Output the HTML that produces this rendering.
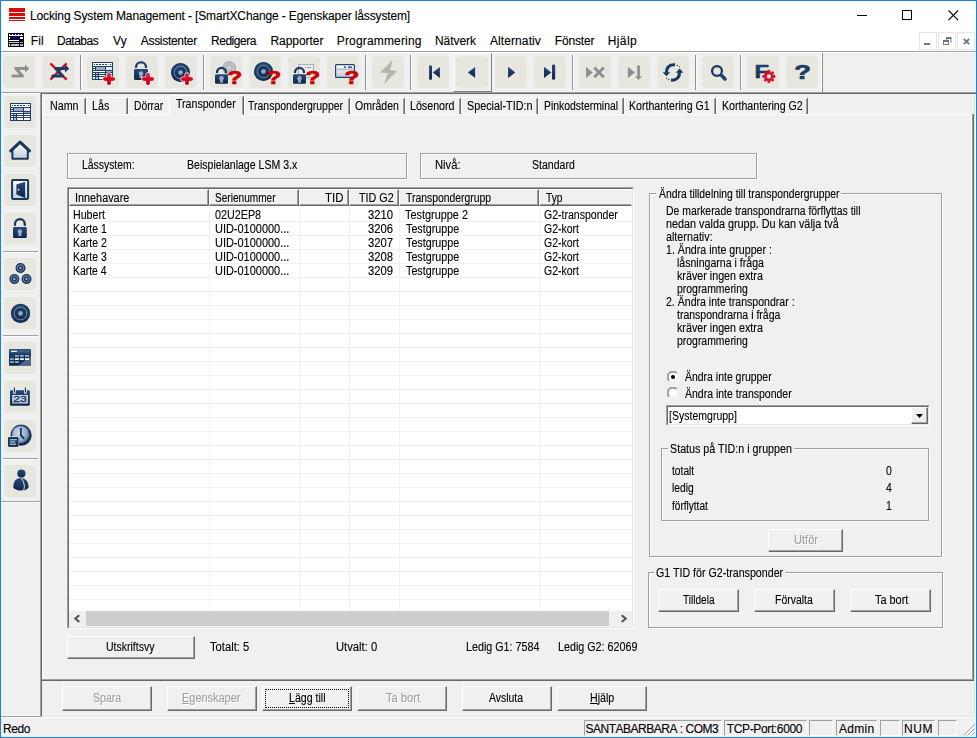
<!DOCTYPE html>
<html lang="sv">
<head>
<meta charset="utf-8">
<title>Locking System Management</title>
<style>
*{box-sizing:border-box;margin:0;padding:0}
html,body{width:977px;height:738px;overflow:hidden;background:#f0f0f0}
body{position:relative;font-family:"Liberation Sans",sans-serif;font-size:11px;color:#000}
body div,body span,body svg{position:absolute}
.t{white-space:nowrap;line-height:14px;height:14px;-webkit-text-stroke:0.12px currentColor}
.seg{font-size:12px;line-height:16px;height:16px;font-kerning:none}
.ms{font-size:12px;transform-origin:0 0;display:inline-block}
.gray{color:#a0a0a0}
.tb{width:32px;height:32px;top:56px;background:#e8e7df;border-radius:4px}
.tsep{width:1px;top:55px;height:35px;background:#a0a0a0}
.sb{width:32px;height:32px;left:4px;background:#e8e7df;border-radius:4px}
.btn{background:#f0f0f0;border:1px solid;border-color:#fff #696969 #696969 #fff;box-shadow:inset -1px -1px 0 #a0a0a0}
.sunk{border:1px solid;border-color:#a0a0a0 #fff #fff #a0a0a0}
.grp{border:1px solid #a0a0a0;box-shadow:1px 1px 0 #fff, inset 1px 1px 0 #fff}
.tab{border-left:1px solid #fff;border-top:1px solid #fff;border-right:1px solid #696969;border-top-left-radius:2px;border-top-right-radius:2px}
u{text-decoration:underline}
</style>
</head>
<body>
<svg width="0" height="0" style="left:0;top:0"><defs>
<linearGradient id="gn" x1="0" y1="0" x2="0" y2="1"><stop offset="0" stop-color="#27497a"/><stop offset="1" stop-color="#0b284c"/></linearGradient>
<linearGradient id="gr" x1="0" y1="0" x2="0" y2="1"><stop offset="0" stop-color="#e8455a"/><stop offset="0.5" stop-color="#d4102a"/><stop offset="1" stop-color="#c00018"/></linearGradient>
<linearGradient id="gw" x1="0" y1="0" x2="0" y2="1"><stop offset="0" stop-color="#ffffff"/><stop offset="1" stop-color="#c3cbdb"/></linearGradient>
<radialGradient id="gc" cx="0.4" cy="0.4" r="0.7"><stop offset="0" stop-color="#d5deea"/><stop offset="0.7" stop-color="#8fa3bf"/><stop offset="1" stop-color="#1b3c66"/></radialGradient>
</defs></svg>
<div class="" style="left:1px;top:1px;width:975px;height:30px;background:#fff"></div>
<div class="" style="left:9px;top:8px;width:16px;height:4px;background:#dc0a0a"></div>
<div class="" style="left:9px;top:13px;width:16px;height:3px;background:#dc0a0a"></div>
<div class="" style="left:9px;top:17px;width:16px;height:2px;background:#dc0a0a"></div>
<div class="" style="left:9px;top:20px;width:16px;height:1px;background:#dc0a0a"></div>
<span class="t seg" id="t0" style="left:30.00px;top:8px;letter-spacing:-0.135px;">Locking System Management - [SmartXChange - Egenskaper låssystem]</span>
<div class="" style="left:857px;top:15px;width:10px;height:1px;background:#000"></div>
<div class="" style="left:902px;top:10px;width:10px;height:10px;border:1px solid #000"></div>
<svg style="left:948px;top:10px" width="11" height="11" viewBox="0 0 11 11"><path d="M0.5 0.5L10.1 10.1M10.1 0.5L0.5 10.1" stroke="#000" stroke-width="1.1" fill="none"/></svg>
<div class="" style="left:1px;top:31px;width:975px;height:20px;background:#fff"></div>
<svg style="left:8px;top:33px" width="16" height="14" viewBox="0 0 16 14"><rect width="16" height="14" fill="#000"/><rect x="1" y="1" width="14" height="2" fill="#fff"/><path d="M2 1.5h2M5 1.5h2M8 1.5h2M11 1.5h2M14 1.5h1" stroke="#1010ff" stroke-width="1"/><rect x="1" y="4" width="1" height="2" fill="#fff"/><rect x="3" y="4" width="8" height="2" fill="#00008b"/><rect x="12" y="4" width="3" height="2" fill="#fff"/><rect x="1" y="7" width="10" height="1" fill="#fff"/><rect x="12" y="7" width="3" height="1" fill="#00008b"/><rect x="1" y="9" width="10" height="1" fill="#c8c8c8"/><rect x="12" y="9" width="3" height="1" fill="#b0b0b0"/><rect x="1" y="11" width="1" height="2" fill="#fff"/><rect x="3" y="11" width="8" height="2" fill="#c0c0c0"/><rect x="12" y="11" width="3" height="2" fill="#b0b0b0"/></svg>
<span class="t seg" id="t1" style="left:30.75px;top:33px;letter-spacing:0.127px;">Fil</span>
<span class="t seg" id="t2" style="left:57.00px;top:33px;letter-spacing:-0.508px;">Databas</span>
<span class="t seg" id="t3" style="left:113.00px;top:33px;letter-spacing:-0.354px;">Vy</span>
<span class="t seg" id="t4" style="left:140.75px;top:33px;letter-spacing:-0.296px;">Assistenter</span>
<span class="t seg" id="t5" style="left:211.00px;top:33px;letter-spacing:-0.468px;">Redigera</span>
<span class="t seg" id="t6" style="left:270.50px;top:33px;letter-spacing:-0.052px;">Rapporter</span>
<span class="t seg" id="t7" style="left:336.75px;top:33px;letter-spacing:0.165px;">Programmering</span>
<span class="t seg" id="t8" style="left:435.00px;top:33px;letter-spacing:-0.074px;">Nätverk</span>
<span class="t seg" id="t9" style="left:490.00px;top:33px;letter-spacing:0.087px;">Alternativ</span>
<span class="t seg" id="t10" style="left:554.75px;top:33px;letter-spacing:-0.173px;">Fönster</span>
<span class="t seg" id="t11" style="left:607.75px;top:33px;letter-spacing:0.395px;">Hjälp</span>
<div class="" style="left:919px;top:32px;width:18px;height:18px;border:1px solid #e5e5e5;background:#fff"></div>
<div class="" style="left:938px;top:32px;width:18px;height:18px;border:1px solid #e5e5e5;background:#fff"></div>
<div class="" style="left:957px;top:32px;width:18px;height:18px;border:1px solid #e5e5e5;background:#fff"></div>
<div class="" style="left:924px;top:43px;width:6px;height:2px;background:#6a768d"></div>
<svg style="left:943px;top:37px" width="9" height="8" viewBox="0 0 9 8"><path d="M3 1h5.5" stroke="#6a768d" stroke-width="2"/><path d="M8 2v3.5M3.5 2v1.5" stroke="#6a768d" stroke-width="1" fill="none"/><rect x="0.5" y="3.5" width="5" height="4" fill="#fff" stroke="#6a768d"/><path d="M0 4h6" stroke="#6a768d" stroke-width="2"/></svg>
<svg style="left:963px;top:38px" width="7" height="7" viewBox="0 0 7 7"><path d="M0.8 0.8L6.2 6.2M6.2 0.8L0.8 6.2" stroke="#6a768d" stroke-width="1.9" fill="none"/></svg>
<div class="" style="left:1px;top:51px;width:975px;height:1px;background:#a0a0a0"></div>
<div class="" style="left:1px;top:52px;width:975px;height:1px;background:#ffffff"></div>
<div class="" style="left:1px;top:92px;width:975px;height:1px;background:#a0a0a0"></div>
<div class="" style="left:1px;top:93px;width:975px;height:1px;background:#696969"></div>
<div class="" style="left:453px;top:53px;width:39px;height:39px;background:#f0f0f0;border:1px solid;border-color:#fff #808080 #808080 #fff"></div>
<div class="tb" style="left:3px;top:56px;width:32px;height:32px;"><svg width="32" height="32" viewBox="0 0 32 32" style="left:0;top:0"><path d="M9.7 20H19.5L12.8 12.5H23" stroke="#8f8f8f" stroke-width="3" fill="none" stroke-linecap="round" stroke-linejoin="round"/><path d="M22 8.6L26.3 12.5L22 16.4z" fill="#8f8f8f"/></svg></div>
<div class="tb" style="left:42px;top:56px;width:32px;height:32px;"><svg width="32" height="32" viewBox="0 0 32 32" style="left:0;top:0"><path d="M8.4 7.4L24.6 23.6M24.6 7.4L8.4 23.6" stroke="#f2ebe6" stroke-width="3.4" fill="none"/><path d="M8.4 7.4L24.6 23.6M24.6 7.4L8.4 23.6" stroke="#e00018" stroke-width="2.2" fill="none"/><g transform="translate(1 0)"><path d="M9.7 20H19.5L12.8 12.5H23" stroke="#1b3c66" stroke-width="3" fill="none" stroke-linecap="round" stroke-linejoin="round"/><path d="M22 8.6L26.3 12.5L22 16.4z" fill="#1b3c66"/></g></svg></div>
<div class="tb" style="left:87px;top:56px;width:32px;height:32px;"><svg width="32" height="32" viewBox="0 0 32 32" style="left:0;top:0"><g transform="translate(5 6)"><rect x="0" y="0" width="21" height="18" fill="#1f3f6b"/><rect x="1" y="1" width="19" height="3" fill="#fff"/><path d="M2 2.5h1M4 2.5h2M7 2.5h2M10 2.5h2M13 2.5h2M18 2.5h1" stroke="#1f3f6b" stroke-width="1"/><path d="M16 2.5h1.5" stroke="#b5bccb" stroke-width="1"/><rect x="1" y="5" width="2" height="1" fill="#fff"/><rect x="1" y="7" width="2" height="1" fill="#fff"/><rect x="4" y="5" width="9" height="3" fill="#9ea6c1"/><rect x="14" y="5" width="6" height="3" fill="#e6e8ef"/><rect x="1" y="9" width="12" height="1" fill="#fff"/><rect x="14" y="9" width="6" height="1" fill="#9ea6c1"/><rect x="1" y="11" width="2" height="1" fill="#fff"/><rect x="4" y="11" width="2" height="1" fill="#b9bed0"/><rect x="7" y="11" width="6" height="1" fill="#fff"/><rect x="14" y="11" width="6" height="1" fill="#fff"/><rect x="1" y="13" width="2" height="1" fill="#fff"/><rect x="4" y="13" width="2" height="1" fill="#b9bed0"/><rect x="7" y="13" width="6" height="1" fill="#fff"/><rect x="14" y="13" width="6" height="1" fill="#fff"/><rect x="1" y="15" width="2" height="2" fill="#fff"/><rect x="4" y="15" width="2" height="2" fill="#b9bed0"/><rect x="7" y="15" width="6" height="2" fill="#fff"/><rect x="14" y="15" width="6" height="2" fill="#fff"/></g><path d="M22 18.8V27.2M17.8 23H26.2" stroke="#f3ebe6" stroke-width="5" stroke-linecap="round" fill="none"/><path d="M22 18.8V27.2M17.8 23H26.2" stroke="url(#gr)" stroke-width="3.5" stroke-linecap="round" fill="none"/><path d="M22 18.8V27.2M17.8 23H26.2" stroke="#d8001c" stroke-width="3.5" stroke-linecap="round" fill="none" opacity="0.55"/></svg></div>
<div class="tb" style="left:126px;top:56px;width:32px;height:32px;"><svg width="32" height="32" viewBox="0 0 32 32" style="left:0;top:0"><path d="M10 11.8V11.3A5 5 0 0 1 20 11.3V11.8" stroke="url(#gn)" stroke-width="2.1" fill="none"/><path d="M10 11.8V11.3A5 5 0 0 1 20 11.3V11.8" stroke="#17365f" stroke-width="2.1" fill="none" opacity="0.5"/><rect x="8" y="13" width="14" height="11" rx="1.3" fill="url(#gn)"/><circle cx="15" cy="17.62" r="2.3" fill="#a3a9c4"/><path d="M13.8 17.62L13.4 21.92H16.6L16.2 17.62z" fill="#a3a9c4"/><path d="M22 18.8V27.2M17.8 23H26.2" stroke="#f3ebe6" stroke-width="5" stroke-linecap="round" fill="none"/><path d="M22 18.8V27.2M17.8 23H26.2" stroke="url(#gr)" stroke-width="3.5" stroke-linecap="round" fill="none"/><path d="M22 18.8V27.2M17.8 23H26.2" stroke="#d8001c" stroke-width="3.5" stroke-linecap="round" fill="none" opacity="0.55"/></svg></div>
<div class="tb" style="left:165px;top:56px;width:32px;height:32px;"><svg width="32" height="32" viewBox="0 0 32 32" style="left:0;top:0"><circle cx="15.5" cy="16.5" r="9.5" fill="url(#gn)"/><circle cx="15.5" cy="16.5" r="9.5" fill="#17375f" opacity="0.45"/><circle cx="15.5" cy="16.5" r="6.365" fill="none" stroke="#8ea0ba" stroke-width="0.8"/><circle cx="15.5" cy="16.5" r="2.28" fill="#9fa7c3"/><path d="M22 18.8V27.2M17.8 23H26.2" stroke="#f3ebe6" stroke-width="5" stroke-linecap="round" fill="none"/><path d="M22 18.8V27.2M17.8 23H26.2" stroke="url(#gr)" stroke-width="3.5" stroke-linecap="round" fill="none"/><path d="M22 18.8V27.2M17.8 23H26.2" stroke="#d8001c" stroke-width="3.5" stroke-linecap="round" fill="none" opacity="0.55"/></svg></div>
<div class="tb" style="left:210px;top:56px;width:32px;height:32px;"><svg width="32" height="32" viewBox="0 0 32 32" style="left:0;top:0"><circle cx="19.2" cy="12.1" r="7" fill="#adb6be"/><circle cx="19.2" cy="12.1" r="4.34" fill="none" stroke="#c4cbd1" stroke-width="1.2"/><circle cx="19.2" cy="12.1" r="2.1" fill="#cdd2d6"/><path d="M7 17V16.4A4.5 4.5 0 0 1 16 16.4V17" stroke="url(#gn)" stroke-width="2.1" fill="none"/><path d="M7 17V16.4A4.5 4.5 0 0 1 16 16.4V17" stroke="#17365f" stroke-width="2.1" fill="none" opacity="0.5"/><rect x="5" y="18.2" width="13" height="9.6" rx="1.3" fill="url(#gn)"/><circle cx="11.5" cy="22.232" r="2.3" fill="#a3a9c4"/><path d="M10.3 22.232L9.9 26.532H13.1L12.7 22.232z" fill="#a3a9c4"/><text x="0" y="0" transform="translate(17.5 28) scale(1.3 1)" font-family="Liberation Sans, sans-serif" font-weight="bold" font-size="18.5" fill="#cc0000" stroke="#cc0000" stroke-width="0.7" stroke-linejoin="round">?</text></svg></div>
<div class="tb" style="left:249px;top:56px;width:32px;height:32px;"><svg width="32" height="32" viewBox="0 0 32 32" style="left:0;top:0"><circle cx="14.5" cy="15.5" r="9.5" fill="url(#gn)"/><circle cx="14.5" cy="15.5" r="9.5" fill="#17375f" opacity="0.45"/><circle cx="14.5" cy="15.5" r="6.365" fill="none" stroke="#8ea0ba" stroke-width="0.8"/><circle cx="14.5" cy="15.5" r="2.28" fill="#9fa7c3"/><text x="0" y="0" transform="translate(17.5 28) scale(1.3 1)" font-family="Liberation Sans, sans-serif" font-weight="bold" font-size="18.5" fill="#cc0000" stroke="#cc0000" stroke-width="0.7" stroke-linejoin="round">?</text></svg></div>
<div class="tb" style="left:288px;top:56px;width:32px;height:32px;"><svg width="32" height="32" viewBox="0 0 32 32" style="left:0;top:0"><rect x="10.5" y="8.5" width="15" height="13" fill="#e9e9e6" stroke="#a7b3c3" stroke-width="1"/><path d="M17 11.5h1M19 11.5h4" stroke="#8c9bb3" stroke-width="1"/><path d="M7 17V16.4A4.5 4.5 0 0 1 16 16.4V17" stroke="url(#gn)" stroke-width="2.1" fill="none"/><path d="M7 17V16.4A4.5 4.5 0 0 1 16 16.4V17" stroke="#17365f" stroke-width="2.1" fill="none" opacity="0.5"/><rect x="5" y="18.2" width="13" height="9.6" rx="1.3" fill="url(#gn)"/><circle cx="11.5" cy="22.232" r="2.3" fill="#a3a9c4"/><path d="M10.3 22.232L9.9 26.532H13.1L12.7 22.232z" fill="#a3a9c4"/><text x="0" y="0" transform="translate(17.5 28) scale(1.3 1)" font-family="Liberation Sans, sans-serif" font-weight="bold" font-size="18.5" fill="#cc0000" stroke="#cc0000" stroke-width="0.7" stroke-linejoin="round">?</text></svg></div>
<div class="tb" style="left:327px;top:56px;width:32px;height:32px;"><svg width="32" height="32" viewBox="0 0 32 32" style="left:0;top:0"><rect x="8.6" y="8.6" width="18.8" height="12.8" rx="1" fill="url(#gw)" stroke="#1f426f" stroke-width="1.2"/><rect x="9.2" y="12.6" width="17.6" height="1.6" fill="#b3bdd6"/><path d="M17 11.2h2M21 11.2h4" stroke="#14305a" stroke-width="1.3"/><text x="0" y="0" transform="translate(17.5 28) scale(1.3 1)" font-family="Liberation Sans, sans-serif" font-weight="bold" font-size="18.5" fill="#cc0000" stroke="#cc0000" stroke-width="0.7" stroke-linejoin="round">?</text></svg></div>
<div class="tb" style="left:372px;top:56px;width:32px;height:32px;"><svg width="32" height="32" viewBox="0 0 32 32" style="left:0;top:0"><path d="M20.7 4L8 16.5L16 17.2L12 28L25 15L18 14.2z" fill="#b5b5af"/></svg></div>
<div class="tb" style="left:417px;top:56px;width:32px;height:32px;"><svg width="32" height="32" viewBox="0 0 32 32" style="left:0;top:0"><rect x="12.1" y="9.2" width="2.9" height="14.7" rx="1.4" fill="url(#gn)"/><path d="M15.8 16.4L22.9 10.9V21.9z" fill="url(#gn)"/></svg></div>
<div class="tb" style="left:456px;top:56px;width:32px;height:32px;"><svg width="32" height="32" viewBox="0 0 32 32" style="left:0;top:0"><path d="M11.8 16.4L19.1 11V21.8z" fill="url(#gn)"/></svg></div>
<div class="tb" style="left:495px;top:56px;width:32px;height:32px;"><svg width="32" height="32" viewBox="0 0 32 32" style="left:0;top:0"><path d="M20.3 16.4L13.1 10.8V22z" fill="url(#gn)"/></svg></div>
<div class="tb" style="left:534px;top:56px;width:32px;height:32px;"><svg width="32" height="32" viewBox="0 0 32 32" style="left:0;top:0"><path d="M17.3 16.4L10 10.8V22z" fill="url(#gn)"/><rect x="18" y="8.6" width="3.2" height="15.2" rx="1.4" fill="url(#gn)"/></svg></div>
<div class="tb" style="left:579px;top:56px;width:32px;height:32px;"><svg width="32" height="32" viewBox="0 0 32 32" style="left:0;top:0"><path d="M13.8 16.4L7 10.9V21.9z" fill="#8e8e8e"/><path d="M15.3 11.5L24.8 21.3M24.8 11.5L15.3 21.3" stroke="#8e8e8e" stroke-width="2.9" fill="none"/></svg></div>
<div class="tb" style="left:618px;top:56px;width:32px;height:32px;"><svg width="32" height="32" viewBox="0 0 32 32" style="left:0;top:0"><path d="M17 16.4L9.9 10.9V21.9z" fill="#8e8e8e"/><rect x="19.2" y="9.2" width="2.7" height="12" rx="1.2" fill="#8e8e8e"/><path d="M17 20.3H24.1L20.55 24z" fill="#8e8e8e"/></svg></div>
<div class="tb" style="left:657px;top:56px;width:32px;height:32px;"><svg width="32" height="32" viewBox="0 0 32 32" style="left:0;top:0"><path d="M18 8.8C12.5 8.3 9.3 11.5 9.5 16.8" stroke="#17375f" stroke-width="3" fill="none"/><path d="M5.6 16.2H13.2L9.4 20.3z" fill="#17375f"/><circle cx="20.3" cy="9.4" r="0.7" fill="#17375f"/><circle cx="22.4" cy="10.6" r="0.6" fill="#17375f"/><g transform="rotate(180 16 16.45)"><path d="M18 8.8C12.5 8.3 9.3 11.5 9.5 16.8" stroke="#17375f" stroke-width="3" fill="none"/><path d="M5.6 16.2H13.2L9.4 20.3z" fill="#17375f"/><circle cx="20.3" cy="9.4" r="0.7" fill="#17375f"/><circle cx="22.4" cy="10.6" r="0.6" fill="#17375f"/></g></svg></div>
<div class="tb" style="left:702px;top:56px;width:32px;height:32px;"><svg width="32" height="32" viewBox="0 0 32 32" style="left:0;top:0"><circle cx="15" cy="15" r="4.9" fill="none" stroke="#17375f" stroke-width="2.3"/><path d="M19.6 19.6L23 23" stroke="#1f426f" stroke-width="3.6" stroke-linecap="round"/></svg></div>
<div class="tb" style="left:747px;top:56px;width:32px;height:32px;"><svg width="32" height="32" viewBox="0 0 32 32" style="left:0;top:0"><text transform="translate(7.6 22) scale(1.32 1)" font-family="Liberation Sans, sans-serif" font-weight="bold" font-size="18" fill="url(#gn)" stroke="#17375f" stroke-width="0.5">F</text><path d="M28.01 19.33L28.01 21.47L26.18 21.43L25.65 22.70L26.97 23.97L25.47 25.47L24.20 24.15L22.93 24.68L22.97 26.51L20.83 26.51L20.87 24.68L19.60 24.15L18.33 25.47L16.83 23.97L18.15 22.70L17.62 21.43L15.79 21.47L15.79 19.33L17.62 19.37L18.15 18.10L16.83 16.83L18.33 15.33L19.60 16.65L20.87 16.12L20.83 14.29L22.97 14.29L22.93 16.12L24.20 16.65L25.47 15.33L26.97 16.83L25.65 18.10L26.18 19.37z" fill="#d4102a" stroke="#d4102a" stroke-width="0.8" stroke-linejoin="round"/><circle cx="21.9" cy="20.4" r="2.1" fill="#f4f0ee"/></svg></div>
<div class="tb" style="left:786px;top:56px;width:32px;height:32px;"><svg width="32" height="32" viewBox="0 0 32 32" style="left:0;top:0"><text x="0" y="0" transform="translate(8.2 23.2) scale(1.36 1)" font-family="Liberation Sans, sans-serif" font-weight="bold" font-size="20" fill="#1b3c66" stroke="#1b3c66" stroke-width="0.7" stroke-linejoin="round">?</text></svg></div>
<div class="" style="left:80px;top:55px;width:1px;height:35px;background:#909090"></div>
<div class="" style="left:81px;top:55px;width:1px;height:35px;background:#ffffff"></div>
<div class="" style="left:203px;top:55px;width:1px;height:35px;background:#909090"></div>
<div class="" style="left:204px;top:55px;width:1px;height:35px;background:#ffffff"></div>
<div class="" style="left:365px;top:55px;width:1px;height:35px;background:#909090"></div>
<div class="" style="left:366px;top:55px;width:1px;height:35px;background:#ffffff"></div>
<div class="" style="left:410px;top:55px;width:1px;height:35px;background:#909090"></div>
<div class="" style="left:411px;top:55px;width:1px;height:35px;background:#ffffff"></div>
<div class="" style="left:572px;top:55px;width:1px;height:35px;background:#909090"></div>
<div class="" style="left:573px;top:55px;width:1px;height:35px;background:#ffffff"></div>
<div class="" style="left:695px;top:55px;width:1px;height:35px;background:#909090"></div>
<div class="" style="left:696px;top:55px;width:1px;height:35px;background:#ffffff"></div>
<div class="" style="left:740px;top:55px;width:1px;height:35px;background:#909090"></div>
<div class="" style="left:741px;top:55px;width:1px;height:35px;background:#ffffff"></div>
<div class="" style="left:821px;top:53px;width:1px;height:39px;background:#ffffff"></div>
<div class="" style="left:822px;top:53px;width:1px;height:39px;background:#909090"></div>
<div class="" style="left:1px;top:93px;width:39px;height:1px;background:#ffffff"></div>
<div class="sb" style="left:4px;top:96px;width:32px;height:32px;"><svg width="32" height="32" viewBox="0 0 32 32" style="left:0;top:0"><g transform="translate(6 7)"><rect x="0" y="0" width="21" height="18" fill="#1f3f6b"/><rect x="1" y="1" width="19" height="3" fill="#fff"/><path d="M2 2.5h1M4 2.5h2M7 2.5h2M10 2.5h2M13 2.5h2M18 2.5h1" stroke="#1f3f6b" stroke-width="1"/><path d="M16 2.5h1.5" stroke="#b5bccb" stroke-width="1"/><rect x="1" y="5" width="2" height="1" fill="#fff"/><rect x="1" y="7" width="2" height="1" fill="#fff"/><rect x="4" y="5" width="9" height="3" fill="#9ea6c1"/><rect x="14" y="5" width="6" height="3" fill="#e6e8ef"/><rect x="1" y="9" width="12" height="1" fill="#fff"/><rect x="14" y="9" width="6" height="1" fill="#9ea6c1"/><rect x="1" y="11" width="2" height="1" fill="#fff"/><rect x="4" y="11" width="2" height="1" fill="#b9bed0"/><rect x="7" y="11" width="6" height="1" fill="#fff"/><rect x="14" y="11" width="6" height="1" fill="#fff"/><rect x="1" y="13" width="2" height="1" fill="#fff"/><rect x="4" y="13" width="2" height="1" fill="#b9bed0"/><rect x="7" y="13" width="6" height="1" fill="#fff"/><rect x="14" y="13" width="6" height="1" fill="#fff"/><rect x="1" y="15" width="2" height="2" fill="#fff"/><rect x="4" y="15" width="2" height="2" fill="#b9bed0"/><rect x="7" y="15" width="6" height="2" fill="#fff"/><rect x="14" y="15" width="6" height="2" fill="#fff"/></g></svg></div>
<div class="sb" style="left:4px;top:135px;width:32px;height:32px;"><svg width="32" height="32" viewBox="0 0 32 32" style="left:0;top:0"><path d="M8.4 15.5L16.1 8.3L23.8 15.5V23.7H8.4z" fill="url(#gw)"/><path d="M8.4 15V23.7H23.8V15" stroke="#17375f" stroke-width="2" fill="none" stroke-linejoin="round"/><path d="M6.7 15.8L16.1 7.1L25.5 15.8" stroke="#17375f" stroke-width="3.1" fill="none" stroke-linejoin="round" stroke-linecap="round"/></svg></div>
<div class="sb" style="left:4px;top:174px;width:32px;height:32px;"><svg width="32" height="32" viewBox="0 0 32 32" style="left:0;top:0"><rect x="8.1" y="6.1" width="16" height="18.8" rx="0.8" fill="url(#gw)" stroke="#17375f" stroke-width="2"/><path d="M12.4 10.4L21.1 7.7V24.1L12.4 20.4z" fill="url(#gn)"/><path d="M13.9 14.4L15.7 15.7L13.9 17z" fill="#fff"/></svg></div>
<div class="sb" style="left:4px;top:213px;width:32px;height:32px;"><svg width="32" height="32" viewBox="0 0 32 32" style="left:0;top:0"><path d="M11 12.8V11A4.9 4.9 0 0 1 20.8 11V12.8" stroke="url(#gn)" stroke-width="2.1" fill="none"/><path d="M11 12.8V11A4.9 4.9 0 0 1 20.8 11V12.8" stroke="#17365f" stroke-width="2.1" fill="none" opacity="0.5"/><rect x="9" y="14" width="13.8" height="11" rx="1.3" fill="url(#gn)"/><circle cx="15.9" cy="18.62" r="2.3" fill="#a3a9c4"/><path d="M14.7 18.62L14.3 22.92H17.5L17.1 18.62z" fill="#a3a9c4"/></svg></div>
<div class="sb" style="left:4px;top:258px;width:32px;height:32px;"><svg width="32" height="32" viewBox="0 0 32 32" style="left:0;top:0"><circle cx="16.5" cy="10" r="4.9" fill="url(#gn)"/><circle cx="16.5" cy="10" r="4.9" fill="#17375f" opacity="0.45"/><circle cx="16.5" cy="10" r="3.283" fill="none" stroke="#8ea0ba" stroke-width="0.8"/><circle cx="16.5" cy="10" r="1.176" fill="#9fa7c3"/><circle cx="10.4" cy="21" r="4.9" fill="url(#gn)"/><circle cx="10.4" cy="21" r="4.9" fill="#17375f" opacity="0.45"/><circle cx="10.4" cy="21" r="3.283" fill="none" stroke="#8ea0ba" stroke-width="0.8"/><circle cx="10.4" cy="21" r="1.176" fill="#9fa7c3"/><circle cx="22.5" cy="21" r="4.9" fill="url(#gn)"/><circle cx="22.5" cy="21" r="4.9" fill="#17375f" opacity="0.45"/><circle cx="22.5" cy="21" r="3.283" fill="none" stroke="#8ea0ba" stroke-width="0.8"/><circle cx="22.5" cy="21" r="1.176" fill="#9fa7c3"/></svg></div>
<div class="sb" style="left:4px;top:297px;width:32px;height:32px;"><svg width="32" height="32" viewBox="0 0 32 32" style="left:0;top:0"><circle cx="16.5" cy="16.4" r="9.6" fill="url(#gn)"/><circle cx="16.5" cy="16.4" r="9.6" fill="#17375f" opacity="0.45"/><circle cx="16.5" cy="16.4" r="6.432" fill="none" stroke="#8ea0ba" stroke-width="0.8"/><circle cx="16.5" cy="16.4" r="2.304" fill="#9fa7c3"/></svg></div>
<div class="sb" style="left:4px;top:342px;width:32px;height:32px;"><svg width="32" height="32" viewBox="0 0 32 32" style="left:0;top:0"><rect x="5" y="7" width="22" height="16.7" rx="0.8" fill="url(#gn)"/><path d="M27 14V23.7H14z" fill="#7f97b5" opacity="0.55"/><rect x="5.6" y="7.6" width="20.8" height="3" fill="#44658f" opacity="0.8"/><rect x="7.1" y="8.7" width="5.8" height="1.2" fill="#fff"/><path d="M11 13.9h3.8M16 13.9h3.8M21 13.9h4M6 17.2h3.8M6 20.1h3.8M11 20.1h3.8" stroke="#9aa9c2" stroke-width="1.8"/><path d="M11 17.2h3.8M16 17.2h3.8M21 17.2h4" stroke="#fff" stroke-width="1.8"/></svg></div>
<div class="sb" style="left:4px;top:381px;width:32px;height:32px;"><svg width="32" height="32" viewBox="0 0 32 32" style="left:0;top:0"><rect x="6" y="9.3" width="19.8" height="15.5" rx="1.2" fill="url(#gn)"/><rect x="8.2" y="14" width="15.8" height="8.5" fill="url(#gw)"/><rect x="8.2" y="14" width="15.8" height="8.5" fill="#8d9db5" opacity="0.35"/><path d="M10.4 6.6V11.6M21.4 6.6V11.6" stroke="#f4f2ec" stroke-width="2.8" stroke-linecap="round"/><path d="M10.4 6.8V11.2M21.4 6.8V11.2" stroke="#17375f" stroke-width="1.2" stroke-linecap="round"/><text x="9.3" y="21.4" font-family="Liberation Sans, sans-serif" font-size="9" fill="#17375f" stroke="#17375f" stroke-width="0.3" textLength="13.6" lengthAdjust="spacingAndGlyphs">23</text></svg></div>
<div class="sb" style="left:4px;top:420px;width:32px;height:32px;"><svg width="32" height="32" viewBox="0 0 32 32" style="left:0;top:0"><circle cx="17.1" cy="15.2" r="10.6" fill="url(#gn)"/><circle cx="16.6" cy="14.6" r="8.6" fill="url(#gc)"/><path d="M16.9 8.5V15.3L19.8 18.4" stroke="#10305a" stroke-width="1.7" fill="none" stroke-linecap="round"/><rect x="3.4" y="16.3" width="11.6" height="11" rx="1.5" fill="#e9e7e1"/><rect x="4" y="16.9" width="10.6" height="10" rx="1.3" fill="#17375f"/><path d="M5.8 19.8h7M5.8 22h5.4M5.8 24.2h6.2" stroke="#dfe4ee" stroke-width="1"/></svg></div>
<div class="sb" style="left:4px;top:465px;width:32px;height:32px;"><svg width="32" height="32" viewBox="0 0 32 32" style="left:0;top:0"><circle cx="17.4" cy="8.6" r="4.1" fill="url(#gn)"/><path d="M9.2 22.5C9.2 16 12.5 12.9 16.8 12.9C21.5 12.9 24.6 16.3 24.6 22.5C22.5 26.6 11.5 26.6 9.2 22.5z" fill="url(#gn)"/><path d="M17.2 13.2C19.6 16.4 20.6 19.5 20.3 22.6C20.1 24.6 19.4 25.4 18 25.6" stroke="#e9e7e1" stroke-width="1" fill="none"/></svg></div>
<div class="" style="left:3px;top:251px;width:35px;height:1px;background:#a0a0a0"></div>
<div class="" style="left:3px;top:252px;width:35px;height:1px;background:#ffffff"></div>
<div class="" style="left:3px;top:335px;width:35px;height:1px;background:#a0a0a0"></div>
<div class="" style="left:3px;top:336px;width:35px;height:1px;background:#ffffff"></div>
<div class="" style="left:3px;top:458px;width:35px;height:1px;background:#a0a0a0"></div>
<div class="" style="left:3px;top:459px;width:35px;height:1px;background:#ffffff"></div>
<div class="" style="left:1px;top:501px;width:39px;height:1px;background:#a0a0a0"></div>
<div class="" style="left:1px;top:502px;width:39px;height:1px;background:#ffffff"></div>
<div class="" style="left:40px;top:93px;width:1px;height:623px;background:#a0a0a0"></div>
<div class="" style="left:41px;top:94px;width:1px;height:622px;background:#696969"></div>
<div class="" style="left:42px;top:94px;width:1px;height:586px;background:#ffffff"></div>
<div class="" style="left:42px;top:114px;width:931px;height:1px;background:#ffffff"></div>
<div class="" style="left:972px;top:114px;width:1px;height:566px;background:#a0a0a0"></div>
<div class="" style="left:973px;top:114px;width:1px;height:567px;background:#696969"></div>
<div class="" style="left:42px;top:679px;width:931px;height:1px;background:#a0a0a0"></div>
<div class="" style="left:42px;top:680px;width:932px;height:1px;background:#696969"></div>
<div class="" style="left:974px;top:94px;width:1px;height:622px;background:#e3e3e3"></div>
<div class="" style="left:975px;top:94px;width:1px;height:623px;background:#ffffff"></div>
<div class="tab" style="left:44px;top:97px;width:42px;height:17px;"></div>
<div class="" style="left:84px;top:99px;width:1px;height:15px;background:#a0a0a0"></div>
<span class="t ms" id="t12" style="left:49.50px;top:99px;transform:scaleX(0.8915);">Namn</span>
<div class="tab" style="left:86px;top:97px;width:42px;height:17px;"></div>
<div class="" style="left:126px;top:99px;width:1px;height:15px;background:#a0a0a0"></div>
<span class="t ms" id="t13" style="left:91.75px;top:99px;transform:scaleX(0.8946);">Lås</span>
<div class="tab" style="left:128px;top:97px;width:43px;height:17px;"></div>
<div class="" style="left:169px;top:99px;width:1px;height:15px;background:#a0a0a0"></div>
<span class="t ms" id="t14" style="left:133.50px;top:99px;transform:scaleX(0.8583);">Dörrar</span>
<div class="tab" style="left:244px;top:97px;width:106px;height:17px;"></div>
<div class="" style="left:348px;top:99px;width:1px;height:15px;background:#a0a0a0"></div>
<span class="t ms" id="t15" style="left:248.25px;top:99px;transform:scaleX(0.8727);">Transpondergrupper</span>
<div class="tab" style="left:350px;top:97px;width:55px;height:17px;"></div>
<div class="" style="left:403px;top:99px;width:1px;height:15px;background:#a0a0a0"></div>
<span class="t ms" id="t16" style="left:355.00px;top:99px;transform:scaleX(0.8768);">Områden</span>
<div class="tab" style="left:405px;top:97px;width:56px;height:17px;"></div>
<div class="" style="left:459px;top:99px;width:1px;height:15px;background:#a0a0a0"></div>
<span class="t ms" id="t17" style="left:410.25px;top:99px;transform:scaleX(0.8891);">Lösenord</span>
<div class="tab" style="left:461px;top:97px;width:77px;height:17px;"></div>
<div class="" style="left:536px;top:99px;width:1px;height:15px;background:#a0a0a0"></div>
<span class="t ms" id="t18" style="left:466.75px;top:99px;transform:scaleX(0.9003);">Special-TID:n</span>
<div class="tab" style="left:538px;top:97px;width:86px;height:17px;"></div>
<div class="" style="left:622px;top:99px;width:1px;height:15px;background:#a0a0a0"></div>
<span class="t ms" id="t19" style="left:543.50px;top:99px;transform:scaleX(0.8678);">Pinkodsterminal</span>
<div class="tab" style="left:624px;top:97px;width:92px;height:17px;"></div>
<div class="" style="left:714px;top:99px;width:1px;height:15px;background:#a0a0a0"></div>
<span class="t ms" id="t20" style="left:629.25px;top:99px;transform:scaleX(0.8824);">Korthantering G1</span>
<div class="tab" style="left:716px;top:97px;width:92px;height:17px;"></div>
<div class="" style="left:806px;top:99px;width:1px;height:15px;background:#a0a0a0"></div>
<span class="t ms" id="t21" style="left:721.50px;top:99px;transform:scaleX(0.8835);">Korthantering G2</span>
<div class="tab" style="left:169px;top:95px;width:75px;height:20px;background:#f0f0f0"></div>
<div class="" style="left:242px;top:97px;width:1px;height:17px;background:#a0a0a0"></div>
<span class="t ms" id="t22" style="left:176.25px;top:97px;transform:scaleX(0.8831);">Transponder</span>
<div class="grp" style="left:67px;top:153px;width:340px;height:26px;"></div>
<div class="grp" style="left:420px;top:153px;width:337px;height:26px;"></div>
<span class="t ms" id="t23" style="left:81.75px;top:158px;transform:scaleX(0.8661);">Låssystem:</span>
<span class="t ms" id="t24" style="left:186.75px;top:158px;transform:scaleX(0.8789);">Beispielanlage LSM 3.x</span>
<span class="t ms" id="t25" style="left:435.00px;top:158px;transform:scaleX(0.9365);">Nivå:</span>
<span class="t ms" id="t26" style="left:532.00px;top:158px;transform:scaleX(0.8783);">Standard</span>
<div class="" style="left:67px;top:187px;width:567px;height:442px;background:#fff;border:1px solid;border-color:#a0a0a0 #ffffff #ffffff #a0a0a0"></div>
<div class="" style="left:68px;top:188px;width:565px;height:440px;border:1px solid;border-color:#696969 #e3e3e3 #e3e3e3 #696969"></div>
<div class="" style="left:69px;top:189px;width:140px;height:17px;background:#f0f0f0;border:1px solid;border-color:#fff #696969 #696969 #fff;box-shadow:inset -1px -1px 0 #a0a0a0"></div>
<div class="" style="left:209px;top:189px;width:90px;height:17px;background:#f0f0f0;border:1px solid;border-color:#fff #696969 #696969 #fff;box-shadow:inset -1px -1px 0 #a0a0a0"></div>
<div class="" style="left:299px;top:189px;width:50px;height:17px;background:#f0f0f0;border:1px solid;border-color:#fff #696969 #696969 #fff;box-shadow:inset -1px -1px 0 #a0a0a0"></div>
<div class="" style="left:349px;top:189px;width:50px;height:17px;background:#f0f0f0;border:1px solid;border-color:#fff #696969 #696969 #fff;box-shadow:inset -1px -1px 0 #a0a0a0"></div>
<div class="" style="left:399px;top:189px;width:140px;height:17px;background:#f0f0f0;border:1px solid;border-color:#fff #696969 #696969 #fff;box-shadow:inset -1px -1px 0 #a0a0a0"></div>
<div class="" style="left:539px;top:189px;width:93px;height:17px;background:#f0f0f0;border:1px solid;border-color:#fff #f0f0f0 #696969 #fff;box-shadow:inset 0 -1px 0 #a0a0a0"></div>
<div class="" style="left:69px;top:221px;width:563px;height:1px;background:#f0f0f0"></div>
<div class="" style="left:69px;top:235px;width:563px;height:1px;background:#f0f0f0"></div>
<div class="" style="left:69px;top:249px;width:563px;height:1px;background:#f0f0f0"></div>
<div class="" style="left:69px;top:263px;width:563px;height:1px;background:#f0f0f0"></div>
<div class="" style="left:69px;top:277px;width:563px;height:1px;background:#f0f0f0"></div>
<div class="" style="left:69px;top:291px;width:563px;height:1px;background:#f0f0f0"></div>
<div class="" style="left:69px;top:305px;width:563px;height:1px;background:#f0f0f0"></div>
<div class="" style="left:69px;top:319px;width:563px;height:1px;background:#f0f0f0"></div>
<div class="" style="left:69px;top:333px;width:563px;height:1px;background:#f0f0f0"></div>
<div class="" style="left:69px;top:347px;width:563px;height:1px;background:#f0f0f0"></div>
<div class="" style="left:69px;top:361px;width:563px;height:1px;background:#f0f0f0"></div>
<div class="" style="left:69px;top:375px;width:563px;height:1px;background:#f0f0f0"></div>
<div class="" style="left:69px;top:389px;width:563px;height:1px;background:#f0f0f0"></div>
<div class="" style="left:69px;top:403px;width:563px;height:1px;background:#f0f0f0"></div>
<div class="" style="left:69px;top:417px;width:563px;height:1px;background:#f0f0f0"></div>
<div class="" style="left:69px;top:431px;width:563px;height:1px;background:#f0f0f0"></div>
<div class="" style="left:69px;top:445px;width:563px;height:1px;background:#f0f0f0"></div>
<div class="" style="left:69px;top:459px;width:563px;height:1px;background:#f0f0f0"></div>
<div class="" style="left:69px;top:473px;width:563px;height:1px;background:#f0f0f0"></div>
<div class="" style="left:69px;top:487px;width:563px;height:1px;background:#f0f0f0"></div>
<div class="" style="left:69px;top:501px;width:563px;height:1px;background:#f0f0f0"></div>
<div class="" style="left:69px;top:515px;width:563px;height:1px;background:#f0f0f0"></div>
<div class="" style="left:69px;top:529px;width:563px;height:1px;background:#f0f0f0"></div>
<div class="" style="left:69px;top:543px;width:563px;height:1px;background:#f0f0f0"></div>
<div class="" style="left:69px;top:557px;width:563px;height:1px;background:#f0f0f0"></div>
<div class="" style="left:69px;top:571px;width:563px;height:1px;background:#f0f0f0"></div>
<div class="" style="left:69px;top:585px;width:563px;height:1px;background:#f0f0f0"></div>
<div class="" style="left:69px;top:599px;width:563px;height:1px;background:#f0f0f0"></div>
<div class="" style="left:209px;top:206px;width:1px;height:405px;background:#f0f0f0"></div>
<div class="" style="left:299px;top:206px;width:1px;height:405px;background:#f0f0f0"></div>
<div class="" style="left:349px;top:206px;width:1px;height:405px;background:#f0f0f0"></div>
<div class="" style="left:399px;top:206px;width:1px;height:405px;background:#f0f0f0"></div>
<div class="" style="left:539px;top:206px;width:1px;height:405px;background:#f0f0f0"></div>
<span class="t ms" id="t27" style="left:74.50px;top:191px;transform:scaleX(0.9038);">Innehavare</span>
<span class="t ms" id="t28" style="left:215.25px;top:191px;transform:scaleX(0.8412);">Serienummer</span>
<span class="t ms" id="t29" style="left:325.25px;top:191px;transform:scaleX(0.9506);">TID</span>
<span class="t ms" id="t30" style="left:358.50px;top:191px;transform:scaleX(0.8983);">TID G2</span>
<span class="t ms" id="t31" style="left:406.00px;top:191px;transform:scaleX(0.8661);">Transpondergrupp</span>
<span class="t ms" id="t32" style="left:546.00px;top:191px;transform:scaleX(0.8486);">Typ</span>
<span class="t ms" id="t33" style="left:72.75px;top:208px;transform:scaleX(0.8861);">Hubert</span>
<span class="t ms" id="t34" style="left:215.25px;top:208px;transform:scaleX(0.8960);">02U2EP8</span>
<span class="t ms" id="t35" style="left:368.00px;top:208px;transform:scaleX(0.9372);">3210</span>
<span class="t ms" id="t36" style="left:405.25px;top:208px;transform:scaleX(0.9073);">Testgruppe 2</span>
<span class="t ms" id="t37" style="left:544.25px;top:208px;transform:scaleX(0.8781);">G2-transponder</span>
<span class="t ms" id="t38" style="left:72.75px;top:222px;transform:scaleX(0.8745);">Karte 1</span>
<span class="t ms" id="t39" style="left:214.75px;top:222px;transform:scaleX(0.9131);">UID-0100000...</span>
<span class="t ms" id="t40" style="left:368.00px;top:222px;transform:scaleX(0.9408);">3206</span>
<span class="t ms" id="t41" style="left:405.50px;top:222px;transform:scaleX(0.8959);">Testgruppe</span>
<span class="t ms" id="t42" style="left:544.25px;top:222px;transform:scaleX(0.8722);">G2-kort</span>
<span class="t ms" id="t43" style="left:72.75px;top:236px;transform:scaleX(0.8745);">Karte 2</span>
<span class="t ms" id="t44" style="left:214.75px;top:236px;transform:scaleX(0.9131);">UID-0100000...</span>
<span class="t ms" id="t45" style="left:368.00px;top:236px;transform:scaleX(0.9427);">3207</span>
<span class="t ms" id="t46" style="left:405.50px;top:236px;transform:scaleX(0.8959);">Testgruppe</span>
<span class="t ms" id="t47" style="left:544.25px;top:236px;transform:scaleX(0.8722);">G2-kort</span>
<span class="t ms" id="t48" style="left:72.75px;top:250px;transform:scaleX(0.8733);">Karte 3</span>
<span class="t ms" id="t49" style="left:214.75px;top:250px;transform:scaleX(0.9131);">UID-0100000...</span>
<span class="t ms" id="t50" style="left:368.00px;top:250px;transform:scaleX(0.9390);">3208</span>
<span class="t ms" id="t51" style="left:405.50px;top:250px;transform:scaleX(0.8959);">Testgruppe</span>
<span class="t ms" id="t52" style="left:544.25px;top:250px;transform:scaleX(0.8722);">G2-kort</span>
<span class="t ms" id="t53" style="left:72.75px;top:264px;transform:scaleX(0.8686);">Karte 4</span>
<span class="t ms" id="t54" style="left:214.75px;top:264px;transform:scaleX(0.9131);">UID-0100000...</span>
<span class="t ms" id="t55" style="left:368.00px;top:264px;transform:scaleX(0.9408);">3209</span>
<span class="t ms" id="t56" style="left:405.50px;top:264px;transform:scaleX(0.8959);">Testgruppe</span>
<span class="t ms" id="t57" style="left:544.25px;top:264px;transform:scaleX(0.8722);">G2-kort</span>
<div class="" style="left:69px;top:611px;width:563px;height:16px;background:#f0f0f0"></div>
<div class="" style="left:86px;top:611px;width:523px;height:15px;background:#cdcdcd"></div>
<svg style="left:73px;top:614px" width="8" height="9" viewBox="0 0 8 9"><path d="M6.3 1.3L2.3 4.6L6.3 7.9" stroke="#505050" stroke-width="2" fill="none"/></svg>
<svg style="left:620px;top:614px" width="8" height="9" viewBox="0 0 8 9"><path d="M1.7 1.3L5.7 4.6L1.7 7.9" stroke="#505050" stroke-width="2" fill="none"/></svg>
<div class="btn" style="left:67px;top:636px;width:128px;height:23px;"></div>
<span class="t ms" id="t58" style="left:106.00px;top:640px;transform:scaleX(0.8764);">Utskriftsvy</span>
<span class="t ms" id="t59" style="left:210.25px;top:640px;transform:scaleX(0.9322);">Totalt: 5</span>
<span class="t ms" id="t60" style="left:335.75px;top:640px;transform:scaleX(0.9369);">Utvalt: 0</span>
<span class="t ms" id="t61" style="left:465.75px;top:640px;transform:scaleX(0.8949);">Ledig G1: 7584</span>
<span class="t ms" id="t62" style="left:557.75px;top:640px;transform:scaleX(0.8950);">Ledig G2: 62069</span>
<div class="grp" style="left:649px;top:193px;width:293px;height:364px;"></div>
<div class="" style="left:656px;top:192px;width:185px;height:3px;background:#f0f0f0"></div>
<span class="t ms" id="t63" style="left:658.50px;top:187px;transform:scaleX(0.8643);">Ändra tilldelning till transpondergrupper</span>
<span class="t ms" id="t64" style="left:665.75px;top:204px;transform:scaleX(0.8679);">De markerade transpondrarna förflyttas till</span>
<span class="t ms" id="t65" style="left:665.75px;top:217px;transform:scaleX(0.9018);">nedan valda grupp. Du kan välja två</span>
<span class="t ms" id="t66" style="left:666.00px;top:230px;transform:scaleX(0.8961);">alternativ:</span>
<span class="t ms" id="t67" style="left:665.75px;top:243px;transform:scaleX(0.8874);">1. Ändra inte grupper :</span>
<span class="t ms" id="t68" style="left:676.50px;top:256px;transform:scaleX(0.8800);">låsningarna i fråga</span>
<span class="t ms" id="t69" style="left:676.50px;top:269px;transform:scaleX(0.8943);">kräver ingen extra</span>
<span class="t ms" id="t70" style="left:676.75px;top:282px;transform:scaleX(0.8700);">programmering</span>
<span class="t ms" id="t71" style="left:666.00px;top:295px;transform:scaleX(0.8802);">2. Ändra inte transpondrar :</span>
<span class="t ms" id="t72" style="left:677.25px;top:308px;transform:scaleX(0.8750);">transpondrarna i fråga</span>
<span class="t ms" id="t73" style="left:676.50px;top:321px;transform:scaleX(0.8943);">kräver ingen extra</span>
<span class="t ms" id="t74" style="left:676.75px;top:334px;transform:scaleX(0.8700);">programmering</span>
<svg style="left:667px;top:371px" width="12" height="12" viewBox="0 0 12 12"><circle cx="6" cy="6" r="5.5" fill="#fff"/><path d="M1.6 10.4A6 6 0 0 1 10.4 1.6" stroke="#a0a0a0" stroke-width="1" fill="none"/><path d="M2.4 9.6A5 5 0 0 1 9.6 2.4" stroke="#696969" stroke-width="1" fill="none"/><path d="M10.4 1.6A6 6 0 0 1 1.6 10.4" stroke="#fff" stroke-width="1" fill="none"/><path d="M9.6 2.4A5 5 0 0 1 2.4 9.6" stroke="#e3e3e3" stroke-width="1" fill="none"/><circle cx="6" cy="6" r="2" fill="#000"/></svg>
<svg style="left:667px;top:387px" width="12" height="12" viewBox="0 0 12 12"><circle cx="6" cy="6" r="5.5" fill="#fff"/><path d="M1.6 10.4A6 6 0 0 1 10.4 1.6" stroke="#a0a0a0" stroke-width="1" fill="none"/><path d="M2.4 9.6A5 5 0 0 1 9.6 2.4" stroke="#696969" stroke-width="1" fill="none"/><path d="M10.4 1.6A6 6 0 0 1 1.6 10.4" stroke="#fff" stroke-width="1" fill="none"/><path d="M9.6 2.4A5 5 0 0 1 2.4 9.6" stroke="#e3e3e3" stroke-width="1" fill="none"/></svg>
<span class="t ms" id="t75" style="left:684.50px;top:370px;transform:scaleX(0.8720);">Ändra inte grupper</span>
<span class="t ms" id="t76" style="left:684.50px;top:387px;transform:scaleX(0.8738);">Ändra inte transponder</span>
<div class="" style="left:666px;top:405px;width:264px;height:21px;background:#fff;border:1px solid;border-color:#a0a0a0 #ffffff #ffffff #a0a0a0"></div>
<div class="" style="left:667px;top:406px;width:262px;height:19px;border:1px solid;border-color:#696969 #e3e3e3 #e3e3e3 #696969"></div>
<div class="btn" style="left:911px;top:407px;width:17px;height:17px;"></div>
<svg style="left:916px;top:414px" width="7" height="4" viewBox="0 0 7 4"><path d="M0 0h7L3.5 4z" fill="#000"/></svg>
<span class="t ms" id="t77" style="left:669.25px;top:409px;transform:scaleX(0.8773);">[Systemgrupp]</span>
<div class="grp" style="left:661px;top:448px;width:268px;height:73px;"></div>
<div class="" style="left:668px;top:447px;width:126px;height:3px;background:#f0f0f0"></div>
<span class="t ms" id="t78" style="left:670.00px;top:442px;transform:scaleX(0.8932);">Status på TID:n i gruppen</span>
<span class="t ms" id="t79" style="left:672.25px;top:464px;transform:scaleX(0.8533);">totalt</span>
<span class="t ms" id="t80" style="left:886.00px;top:464px;transform:scaleX(0.8700);">0</span>
<span class="t ms" id="t81" style="left:671.75px;top:481px;transform:scaleX(0.8603);">ledig</span>
<span class="t ms" id="t82" style="left:886.25px;top:481px;transform:scaleX(0.8700);">4</span>
<span class="t ms" id="t83" style="left:672.25px;top:499px;transform:scaleX(0.8387);">förflyttat</span>
<span class="t ms" id="t84" style="left:885.50px;top:499px;transform:scaleX(0.8700);">1</span>
<div class="btn" style="left:768px;top:529px;width:75px;height:23px;"></div>
<span class="t ms" id="t85" style="left:793.75px;top:533px;transform:scaleX(0.9234);color:#a0a0a0;text-shadow:1.15px 1px 0 #fff">Utför</span>
<div class="grp" style="left:648px;top:572px;width:295px;height:56px;"></div>
<div class="" style="left:654px;top:571px;width:131px;height:3px;background:#f0f0f0"></div>
<span class="t ms" id="t86" style="left:656.00px;top:566px;transform:scaleX(0.8878);">G1 TID för G2-transponder</span>
<div class="btn" style="left:658px;top:589px;width:81px;height:23px;"></div>
<span class="t ms" id="t87" style="left:682.75px;top:593px;transform:scaleX(0.8381);">Tilldela</span>
<div class="btn" style="left:754px;top:589px;width:81px;height:23px;"></div>
<span class="t ms" id="t88" style="left:774.75px;top:593px;transform:scaleX(0.8722);">Förvalta</span>
<div class="btn" style="left:850px;top:589px;width:81px;height:23px;"></div>
<span class="t ms" id="t89" style="left:874.75px;top:593px;transform:scaleX(0.9078);">Ta bort</span>
<div class="btn" style="left:62px;top:686px;width:90px;height:25px;"></div>
<span class="t ms" id="t90" style="left:93.25px;top:691px;transform:scaleX(0.8780);color:#a0a0a0;text-shadow:1.15px 1px 0 #fff">Spara</span>
<div class="btn" style="left:167px;top:686px;width:90px;height:25px;"></div>
<span class="t ms" id="t91" style="left:182.25px;top:691px;transform:scaleX(0.9110);color:#a0a0a0;text-shadow:1.15px 1px 0 #fff"><u>E</u>genskaper</span>
<div class="btn" style="left:262px;top:686px;width:90px;height:25px;"></div>
<div class="" style="left:265px;top:689px;width:84px;height:19px;border:1px dotted #000"></div>
<span class="t ms" id="t92" style="left:288.50px;top:691px;transform:scaleX(0.8828);"><u>L</u>ägg till</span>
<div class="btn" style="left:357px;top:686px;width:90px;height:25px;"></div>
<span class="t ms" id="t93" style="left:385.50px;top:691px;transform:scaleX(0.9271);color:#a0a0a0;text-shadow:1.15px 1px 0 #fff">Ta bort</span>
<div class="btn" style="left:462px;top:686px;width:90px;height:25px;"></div>
<span class="t ms" id="t94" style="left:489.25px;top:691px;transform:scaleX(0.8682);">Avsluta</span>
<div class="btn" style="left:557px;top:686px;width:90px;height:25px;"></div>
<span class="t ms" id="t95" style="left:589.50px;top:691px;transform:scaleX(0.8873);"><u>H</u>jälp</span>
<div class="" style="left:1px;top:715px;width:39px;height:1px;background:#fafafa"></div>
<div class="" style="left:1px;top:716px;width:40px;height:1px;background:#a0a0a0"></div>
<div class="" style="left:41px;top:716px;width:935px;height:1px;background:#e3e3e3"></div>
<div class="" style="left:1px;top:717px;width:975px;height:1px;background:#ffffff"></div>
<span class="t seg" id="t96" style="left:3.00px;top:721px;letter-spacing:-0.421px;">Redo</span>
<div class="" style="left:584px;top:720px;width:138px;height:16px;border:1px solid;border-color:#a0a0a0 #ffffff #ffffff #a0a0a0"></div>
<div class="" style="left:724px;top:720px;width:83px;height:16px;border:1px solid;border-color:#a0a0a0 #ffffff #ffffff #a0a0a0"></div>
<div class="" style="left:809px;top:720px;width:24px;height:16px;border:1px solid;border-color:#a0a0a0 #ffffff #ffffff #a0a0a0"></div>
<div class="" style="left:836px;top:720px;width:41px;height:16px;border:1px solid;border-color:#a0a0a0 #ffffff #ffffff #a0a0a0"></div>
<div class="" style="left:880px;top:720px;width:20px;height:16px;border:1px solid;border-color:#a0a0a0 #ffffff #ffffff #a0a0a0"></div>
<div class="" style="left:902px;top:720px;width:33px;height:16px;border:1px solid;border-color:#a0a0a0 #ffffff #ffffff #a0a0a0"></div>
<div class="" style="left:938px;top:720px;width:19px;height:16px;border:1px solid;border-color:#a0a0a0 #ffffff #ffffff #a0a0a0"></div>
<span class="t seg" id="t97" style="left:585.50px;top:721px;letter-spacing:-0.489px;">SANTABARBARA : COM3</span>
<span class="t seg" id="t98" style="left:726.75px;top:721px;letter-spacing:-0.363px;">TCP-Port:6000</span>
<span class="t seg" id="t99" style="left:839.00px;top:721px;letter-spacing:0.265px;">Admin</span>
<span class="t seg" id="t100" style="left:904.00px;top:721px;letter-spacing:0.634px;">NUM</span>
<svg style="left:962px;top:723px" width="13" height="13" viewBox="0 0 13 13"><path d="M12.5 1.5L1.5 12.5M12.5 5.5L5.5 12.5M12.5 9.5L9.5 12.5" stroke="#a0a0a0" stroke-width="1"/><path d="M12.5 2.5L2.5 12.5M12.5 6.5L6.5 12.5M12.5 10.5L10.5 12.5" stroke="#fff" stroke-width="1"/></svg>
<div class="" style="left:0px;top:0px;width:977px;height:1px;background:#1883d7"></div>
<div class="" style="left:0px;top:737px;width:977px;height:1px;background:#1883d7"></div>
<div class="" style="left:0px;top:0px;width:1px;height:738px;background:#1883d7"></div>
<div class="" style="left:976px;top:0px;width:1px;height:738px;background:#1883d7"></div>
</body>
</html>
